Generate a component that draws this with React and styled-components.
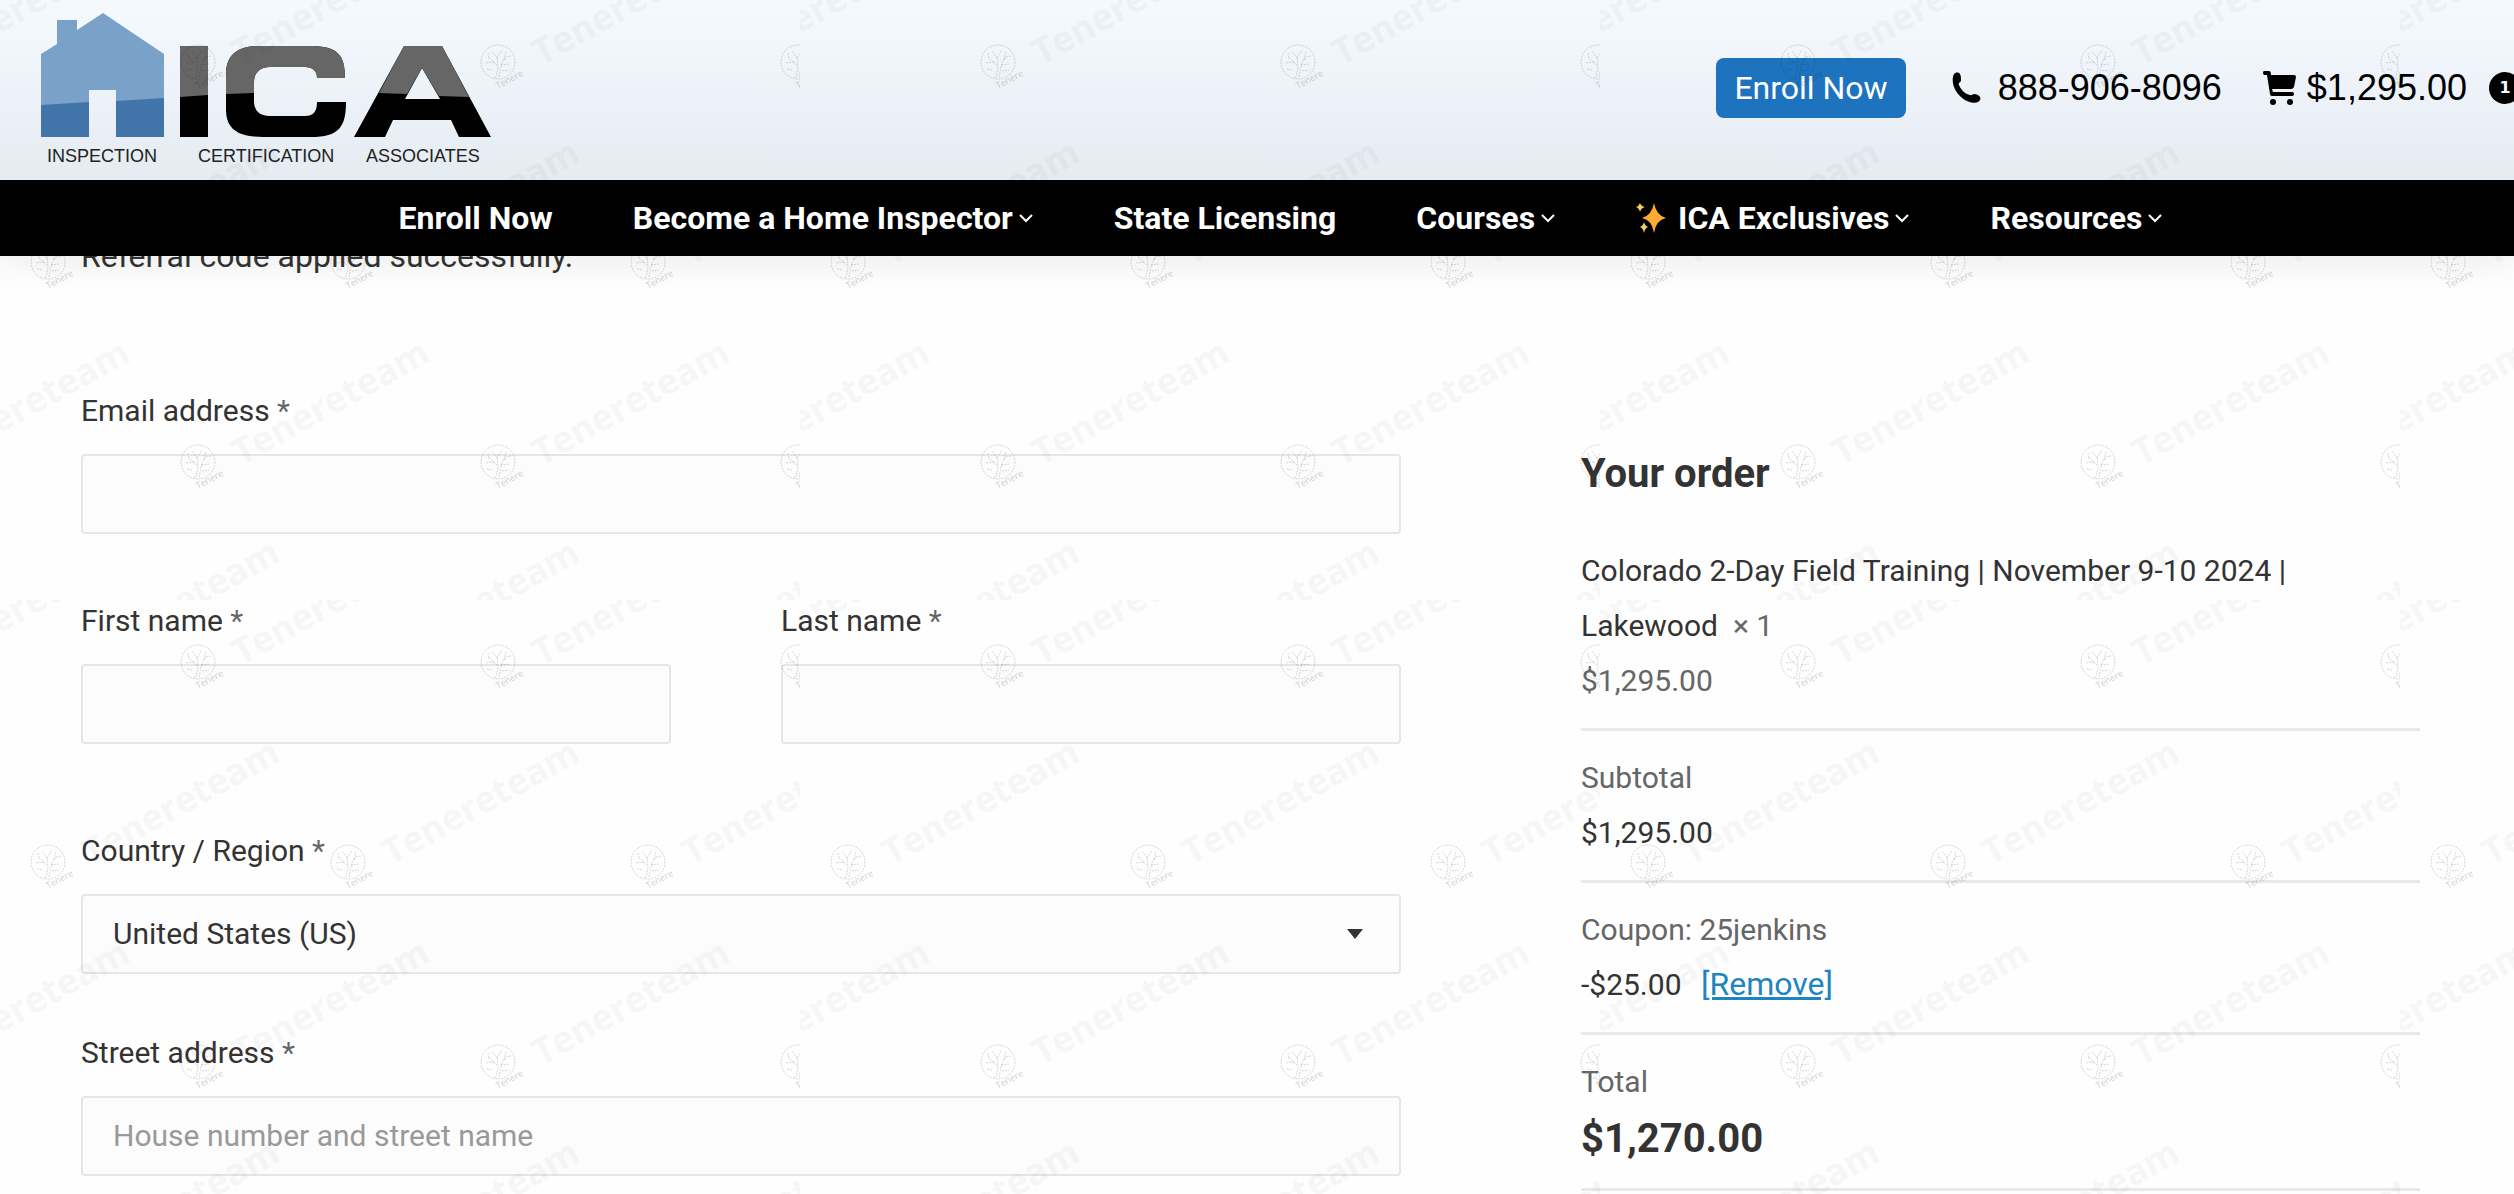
import React from 'react'
import styled, { createGlobalStyle } from 'styled-components'

const navItems = [
    { label: 'Enroll Now' },
    { label: 'Become a Home Inspector', menu: true },
    { label: 'State Licensing' },
    { label: 'Courses', menu: true },
    { label: 'ICA Exclusives', menu: true, sparkle: true },
    { label: 'Resources', menu: true },
]

const stamps = [
    [-102, 62], [198, 62], [498, 62], [798, 62],
    [48, 262], [348, 262], [648, 262],
    [-102, 462], [198, 462], [498, 462], [798, 462],
    [48, 662], [348, 662], [648, 662],
]

function Logo() {
    return (
        <LogoSvg viewBox="0 0 460 154" role="img" aria-label="ICA Inspection Certification Associates">
            <path fill="#7aa2c9" d="M0 41L16 31V7H36V17L62 0L123 41V124H75V77H48V124H0Z" />
            <path fill="#4174a8" d="M0 92L48 89V124H0ZM75 88L123 85V124H75Z" />
            <path fill="#000" d="M139 33H167V124H139Z M304 65H276C276 58 272 54 264 54H229C219 54 213 60 213 69V88C213 98 219 103 229 103H264C272 103 276 99 276 89H305C305 114 298 124 270 124H222C194 124 185 114 185 96V62C185 43 195 33 219 33H269C297 33 304 42 304 65Z" />
            <path fill="#000" fillRule="evenodd" d="M363 33H401L450 124H418L410 107H352L344 124H313ZM381 55L364 86H399Z" />
            <path fill="#666" d="M139 33H167V82L139 84ZM304 65H276C276 58 272 54 264 54H229C219 54 213 60 213 69V80L185 81V62C185 43 195 33 219 33H269C297 33 304 42 304 65Z" />
            <path fill="#666" d="M363 33H401L428 84L398 83L381 55L366 81L338 80Z" />
            <LogoText x="6" y="149">INSPECTION</LogoText>
            <LogoText x="157" y="149">CERTIFICATION</LogoText>
            <LogoText x="325" y="149">ASSOCIATES</LogoText>
        </LogoSvg>
    )
}

function PhoneIcon() {
    return (
        <svg width="30" height="32" viewBox="0 0 30 32" aria-hidden="true">
            <path d="M2 2C3 1 5 0 7 1C9 2 9 6 9 8C9 11 6 10 7 13C9 18 13 22 18 23C20 24 20 22 22 22C24 22 27 23 28 25C29 27 28 29 26 30C23 32 14 30 9 25C1 18-1 8 2 2Z" />
        </svg>
    )
}

function CartIcon() {
    return (
        <svg width="34" height="34" viewBox="0 0 34 34" aria-hidden="true">
            <path d="M1 0H6Q8 0 8 4H31Q33 4 33 6L31 16Q30 18 28 18H9L10 21H29Q31 21 31 23Q31 25 29 25H9Q7 25 7 23L4 4H1Q0 3 0 2Q0 0 1 0Z" />
            <circle cx="10" cy="31" r="3" />
            <circle cx="27" cy="31" r="3" />
        </svg>
    )
}

function Sparkles() {
    return (
        <svg width="30" height="32" viewBox="0 0 30 32" aria-hidden="true">
            <path fill="#fdab33" d="M18 1Q20 13 30 16Q20 18 18 31Q16 18 6 16Q16 13 18 1Z" />
            <path fill="#f4cf5c" d="M4 1Q5 4 9 5Q5 6 4 10Q3 6 0 5Q3 4 4 1ZM8 20Q9 24 12 25Q9 26 8 31Q7 26 4 25Q7 24 8 20Z" />
        </svg>
    )
}

function Chevron() {
    return (
        <svg width="16" height="12" viewBox="0 0 16 12" fill="none" stroke="#fff" strokeWidth="2" aria-hidden="true">
            <path d="M2 3L8 9L14 3" />
        </svg>
    )
}

function Stamp({ x, y }) {
    return (
        <g transform={`translate(${x} ${y})`}>
            <g fill="none" stroke="#000" strokeOpacity="0.15" strokeDasharray="2 1">
                <circle r="17" />
                <path d="M-3 16C1 8 0 2-1-4M1 15C3 6 3 0 8-5M-1 3L-9-4M-4 0L-12 1M-1-4L-6-11M-1-4L4-12M3 3L11 2M8-5L13-6M6-2L8-11M-9-4L-10-9M-6 8L-11 7M4 9L11 8" />
            </g>
            <StampName x="0" y="27" transform="rotate(-28 0 27)">Tenere</StampName>
            <StampText x="43" y="4" transform="rotate(-29 43 4)">Tenereteam</StampText>
        </g>
    )
}

function Watermark() {
    return (
        <WatermarkSvg aria-hidden="true">
            <defs>
                <pattern id="stamps" width="800" height="600" patternUnits="userSpaceOnUse">
                    {stamps.map(([x, y]) => <Stamp key={`${x},${y}`} x={x} y={y} />)}
                </pattern>
            </defs>
            <rect width="100%" height="100%" fill="url(#stamps)" />
        </WatermarkSvg>
    )
}

function Field({ id, label, gap, children }) {
    return (
        <FieldBox $gap={gap}>
            <Label htmlFor={id}>{label} <Star>*</Star></Label>
            {children}
        </FieldBox>
    )
}

export default function App() {
    return (
        <Page>
            <GlobalStyle />
            <Header>
                <TopBar>
                    <Logo />
                    <TopLinks>
                        <EnrollButton type="button">Enroll Now</EnrollButton>
                        <TopLink href="tel:8889068096"><PhoneIcon />888-906-8096</TopLink>
                        <CartLink href="#cart"><CartIcon />$1,295.00<Badge>1</Badge></CartLink>
                    </TopLinks>
                </TopBar>
                <Nav>
                    {navItems.map(item => (
                        <NavLink key={item.label} href="#menu">
                            {item.sparkle && <Sparkles />}
                            <NavLabel>{item.label}{item.menu && <Chevron />}</NavLabel>
                        </NavLink>
                    ))}
                </Nav>
            </Header>
            <Main>
                <Form>
                    <Notice>Referral code applied successfully.</Notice>
                    <Field id="email" label="Email address" gap={62}>
                        <Input id="email" type="email" />
                    </Field>
                    <NameRow>
                        <Field id="first" label="First name" gap={82}>
                            <Input id="first" type="text" />
                        </Field>
                        <Field id="last" label="Last name" gap={82}>
                            <Input id="last" type="text" />
                        </Field>
                    </NameRow>
                    <Field id="country" label="Country / Region" gap={54}>
                        <SelectWrap>
                            <Select id="country" defaultValue="US">
                                <option value="US">United States (US)</option>
                            </Select>
                            <Arrow />
                        </SelectWrap>
                    </Field>
                    <Field id="street" label="Street address" gap={16}>
                        <Input id="street" type="text" placeholder="House number and street name" />
                    </Field>
                </Form>
                <Order>
                    <OrderTitle>Your order</OrderTitle>
                    <OrderTable>
                        <tbody>
                            <OrderRow>
                                <ItemName scope="row">Colorado 2-Day Field Training | November 9-10 2024 | Lakewood&nbsp; <Quantity>× 1</Quantity></ItemName>
                                <ItemPrice>$1,295.00</ItemPrice>
                            </OrderRow>
                            <OrderRow>
                                <RowName scope="row">Subtotal</RowName>
                                <RowValue>$1,295.00</RowValue>
                            </OrderRow>
                            <OrderRow>
                                <RowName scope="row">Coupon: 25jenkins</RowName>
                                <RowValue>-$25.00 <Remove href="#remove">[Remove]</Remove></RowValue>
                            </OrderRow>
                            <OrderRow>
                                <RowName scope="row">Total</RowName>
                                <TotalValue>$1,270.00</TotalValue>
                            </OrderRow>
                        </tbody>
                    </OrderTable>
                </Order>
            </Main>
            <Watermark />
        </Page>
    )
}

const GlobalStyle = createGlobalStyle`
    * {
        box-sizing: border-box;
    }
    body {
        margin: 0;
        background: #fefefe;
        color: #333;
        font-family: Roboto, sans-serif;
        font-size: 30px;
        overflow: hidden;
    }
`

const Page = styled.div`
    position: relative;
    min-height: 100vh;
    overflow: hidden;
`

const Header = styled.header`
    position: relative;
    z-index: 2;
    box-shadow: 0 0 40px rgba(0,0,0,0.1);
`

const TopBar = styled.div`
    display: flex;
    justify-content: space-between;
    align-items: flex-start;
    height: 180px;
    padding-left: 41px;
    background: linear-gradient(#f4fafc, #eff4fb 40%, #e4ebf1);
`

const LogoSvg = styled.svg`
    width: 460px;
    height: 154px;
    margin-top: 13px;
    overflow: visible;
`

const LogoText = styled.text`
    font-family: 'Liberation Sans', Arial, sans-serif;
    font-size: 18px;
    fill: #222;
`

const TopLinks = styled.div`
    display: flex;
    align-items: center;
    height: 176px;
    margin-right: -7px;
    font-family: 'Liberation Sans', Arial, sans-serif;
    font-size: 36px;
`

const EnrollButton = styled.button`
    height: 60px;
    padding: 0 18px;
    margin-right: 46px;
    border: 0;
    border-radius: 8px;
    background: #1e73be;
    color: #fff;
    font-family: Roboto, sans-serif;
    font-size: 32px;
`

const TopLink = styled.a`
    display: flex;
    align-items: center;
    gap: 16px;
    color: #000;
    text-decoration: none;
`

const CartLink = styled(TopLink)`
    gap: 10px;
    margin-left: 41px;
`

const Badge = styled.span`
    width: 32px;
    height: 32px;
    margin-left: 12px;
    border-radius: 50%;
    background: #000;
    color: #fff;
    font-family: 'DejaVu Sans', sans-serif;
    font-size: 16px;
    font-weight: bold;
    line-height: 32px;
    text-align: center;
`

const Nav = styled.nav`
    display: flex;
    justify-content: center;
    align-items: center;
    gap: 80px;
    height: 76px;
    padding-left: 48px;
    background: #000;
`

const NavLink = styled.a`
    display: flex;
    align-items: center;
    gap: 12px;
    color: #fff;
    font-size: 32px;
    font-weight: bold;
    text-decoration: none;
`

const NavLabel = styled.span`
    display: flex;
    align-items: center;
    gap: 5px;
`

const Main = styled.main`
    display: grid;
    grid-template-columns: 1320fr 839fr;
    column-gap: 180px;
    padding: 0 94px 0 81px;
`

const Form = styled.form`
    display: flex;
    flex-direction: column;
    margin-top: -24px;
`

const Notice = styled.p`
    margin: 0 0 106px;
    font-size: 32px;
    line-height: 48px;
`

const FieldBox = styled.div`
    display: flex;
    flex-direction: column;
    margin-bottom: ${props => props.$gap}px;
`

const NameRow = styled.div`
    display: grid;
    grid-template-columns: 590fr 620fr;
    column-gap: 110px;
`

const Label = styled.label`
    padding-top: 1px;
    margin-bottom: 19px;
    line-height: 48px;
`

const Star = styled.span`
    color: #666;
`

const Input = styled.input`
    width: 100%;
    height: 80px;
    padding: 0 30px 2px;
    border: 2px solid #e6e6e6;
    border-radius: 4px;
    background: #fcfcfc;
    color: #333;
    font: inherit;
    &::placeholder {
        color: #999;
    }
`

const SelectWrap = styled.div`
    position: relative;
`

const Select = styled(Input).attrs({ as: 'select' })`
    appearance: none;
`

const Arrow = styled.span`
    position: absolute;
    top: 35px;
    right: 38px;
    border: 8px solid transparent;
    border-top: 10px solid #333;
    border-bottom: 0;
    pointer-events: none;
`

const Order = styled.section`
    margin-top: 190px;
`

const OrderTitle = styled.h3`
    margin: 0 0 41px;
    font-size: 40px;
    line-height: 56px;
`

const OrderTable = styled.table`
    display: block;
    border-spacing: 0;
    line-height: 55px;
    tbody {
        display: block;
    }
`

const OrderRow = styled.tr`
    display: block;
    padding-bottom: 20px;
    margin-bottom: 19px;
    border-bottom: 3px solid #e9e9e9;
`

const RowName = styled.th`
    display: block;
    padding: 0;
    color: #666;
    font-weight: normal;
    text-align: left;
`

const ItemName = styled(RowName)`
    padding-right: 100px;
    color: #333;
`

const Quantity = styled.span`
    color: #666;
`

const RowValue = styled.td`
    display: block;
    padding: 0;
`

const ItemPrice = styled(RowValue)`
    color: #666;
`

const TotalValue = styled(RowValue)`
    font-size: 40px;
    font-weight: bold;
    line-height: 59px;
`

const Remove = styled.a`
    margin-left: 12px;
    color: #1e85be;
    font-size: 32px;
    line-height: 1;
`

const WatermarkSvg = styled.svg`
    position: absolute;
    inset: 0;
    z-index: 3;
    width: 100%;
    height: 100%;
    pointer-events: none;
`

const StampText = styled.text`
    font-family: 'Open Sans', sans-serif;
    font-size: 36px;
    font-weight: bold;
    fill: rgba(0,0,0,0.03);
`

const StampName = styled.text`
    font-family: 'Open Sans', sans-serif;
    font-size: 9px;
    fill: rgba(0,0,0,0.2);
`
